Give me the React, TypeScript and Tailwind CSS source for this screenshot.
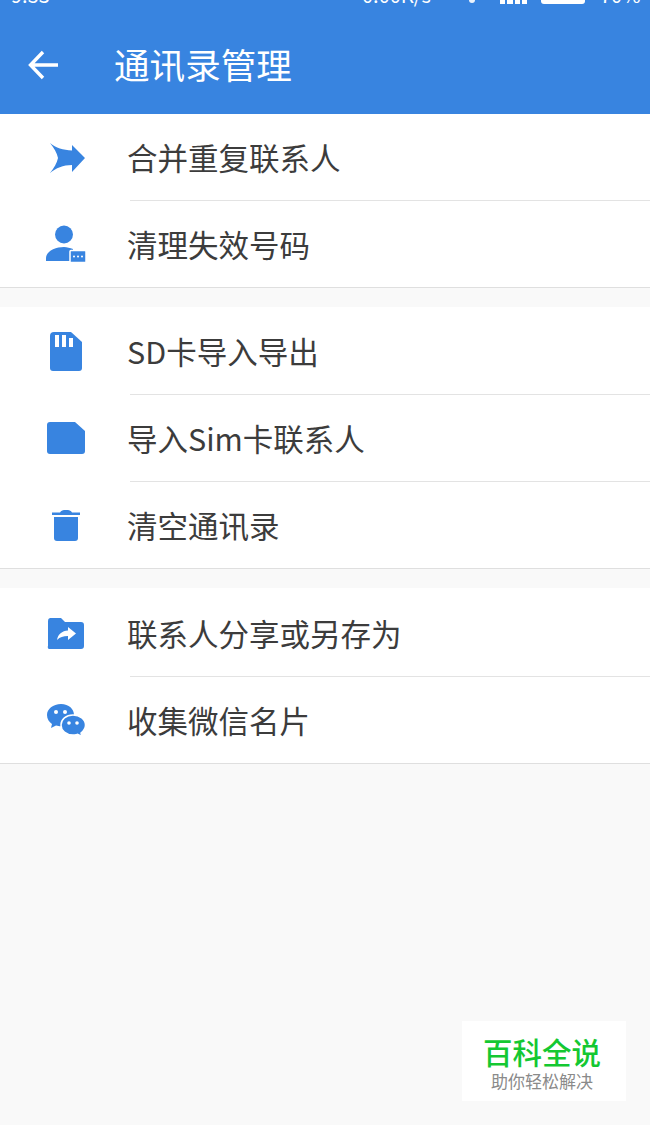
import React from 'react';

const FONT = '"Noto Sans CJK SC", "Noto Sans", sans-serif';

const MergeIcon = () => (
  <svg width="38" height="32" viewBox="0 0 38 32" fill="#3884e0">
    <path d="M3 1 C9 6 16 8 25 8.5 L25 3 L38 16 L25 30 L25 23 C16 23 9 26 3 31 C7 26 10 21 11 16 C10 11 7 6 3 1 Z" />
  </svg>
);

const PersonIcon = () => (
  <svg width="40" height="38" viewBox="0 0 40 38" fill="#3884e0">
    <circle cx="18" cy="9.5" r="9" />
    <path d="M0 36 V33 C0 26 10 22 18 22 C21 22 24 23 27 24 V36 Z" />
    <rect x="24" y="25.5" width="16" height="12" rx="1" stroke="#fff" strokeWidth="1.5" />
    <circle cx="28" cy="31.5" r="1" fill="#fff" />
    <circle cx="32" cy="31.5" r="1" fill="#fff" />
    <circle cx="36" cy="31.5" r="1" fill="#fff" />
  </svg>
);

const SdIcon = () => (
  <svg width="34" height="40" viewBox="0 0 34 40" fill="#3884e0">
    <path d="M5 0 H22 L33 10 V36 A3 3 0 0 1 30 39 H4 A3 3 0 0 1 1 36 V4 A4 4 0 0 1 5 0 Z" />
    <rect x="6" y="3" width="4" height="12" fill="#fff" />
    <rect x="13" y="3" width="4" height="12" fill="#fff" />
    <rect x="20" y="6" width="4" height="9" fill="#fff" />
  </svg>
);

const SimIcon = () => (
  <svg width="40" height="33" viewBox="0 0 40 33" fill="#3884e0">
    <path d="M4 0 H29 L39 9 V29 A3 3 0 0 1 36 32 H4 A3 3 0 0 1 1 29 V3 A3 3 0 0 1 4 0 Z" />
  </svg>
);

const TrashIcon = () => (
  <svg width="30" height="34" viewBox="0 0 30 34" fill="#3884e0">
    <path d="M1 4.5 H9 C10 2.5 12 2 15 2 C18 2 20 2.5 21 4.5 H29 V7 H1 Z" />
    <path d="M3 9 H27 V30 A3 3 0 0 1 24 33 H6 A3 3 0 0 1 3 30 Z" />
  </svg>
);

const FolderShareIcon = () => (
  <svg width="38" height="32" viewBox="0 0 38 32" fill="#3884e0">
    <path d="M3 0 H14 L18 4 H34 A3 3 0 0 1 37 7 V28 A3 3 0 0 1 34 31 H3 A2 2 0 0 1 1 28 V3 A3 3 0 0 1 3 0 Z" />
    <path d="M21 9 L29 15.5 L21 22 V18 C16 18 13 19 10 22 C11 16 15 13 21 12.5 Z" fill="#fff" />
  </svg>
);

const WechatIcon = () => (
  <svg width="40" height="34" viewBox="0 0 40 34" fill="#3884e0">
    <path d="M15 1 C7 1 1 6 1 12 C1 16 3 19 6 21 L5 25 L10 22.5 C12 23 13 23.2 15 23.2 C23 23.2 28 18 28 12 C28 6 23 1 15 1 Z" />
    <path
      d="M27 12 C20 12 15 16.5 15 22 C15 27.5 20 32 27 32 C29 32 30 31.7 31.5 31.3 L36 33.5 L35 30 C37.5 28 39.5 25.5 39.5 22 C39.5 16.5 34 12 27 12 Z"
      stroke="#fff"
      strokeWidth="1.5"
    />
    <circle cx="10" cy="9" r="2" fill="#fff" />
    <circle cx="19" cy="9" r="2" fill="#fff" />
    <circle cx="23" cy="20" r="1.8" fill="#fff" />
    <circle cx="31" cy="20" r="1.8" fill="#fff" />
  </svg>
);

const Row = ({ icon, label, divider }: { icon: React.ReactNode; label: string; divider?: boolean }) => (
  <div className={`flex items-stretch ${divider ? 'h-[87px]' : 'h-[86px]'}`}>
    <div className="flex w-[130px] shrink-0 items-center pl-[46px]">
      <div className="flex w-[40px] items-center justify-center">{icon}</div>
    </div>
    <div className={`flex flex-1 items-center ${divider ? 'border-b border-[#e3e3e3]' : ''}`}>
      <span className="-ml-[3px] text-[30.5px] leading-none text-[#3c3c3c]">{label}</span>
    </div>
  </div>
);

const Group = ({ children, className = '' }: { children: React.ReactNode; className?: string }) => (
  <div className={`border-b border-[#dfdfdf] bg-white ${className}`}>{children}</div>
);

export default function App() {
  return (
    <div className="flex h-[1125px] w-[650px] flex-col overflow-hidden bg-[#f9f9f9]" style={{ fontFamily: FONT }}>
      <header className="relative h-[114px] shrink-0 overflow-hidden bg-[#3884e0] text-white">
        <div className="absolute -top-[17px] left-[11px] text-[20px] leading-[24px]">9:53</div>
        <div className="absolute -top-[17px] left-[362px] text-[20px] leading-[24px]">0.00K/s</div>
        <div className="absolute left-[469px] top-0 h-[3px] w-[6px] rounded-b-[3px] bg-white/90" />
        <div className="absolute left-[500px] top-0 flex h-[4px] w-[27px] gap-[2px]">
          <span className="flex-1 bg-white" />
          <span className="flex-1 bg-white" />
          <span className="flex-1 bg-white" />
          <span className="flex-1 bg-white" />
        </div>
        <div className="absolute left-[541px] top-0 h-[4px] w-[44px] rounded-b-[3px] bg-white" />
        <div className="absolute -top-[17px] left-[600px] text-[20px] leading-[24px]">70%</div>
        <div className="flex h-full items-center pt-[14px]">
          <svg className="ml-[28px] mt-[1px]" width="31" height="30" viewBox="0 0 31 30" fill="none" stroke="#fff" strokeWidth="3.4">
            <path d="M30 15 H3 M15 2 L2.5 15 L15 28" />
          </svg>
          <h1 className="ml-[55px] text-[35.6px] font-normal leading-none">通讯录管理</h1>
        </div>
      </header>

      <Group>
        <Row icon={<MergeIcon />} label="合并重复联系人" divider />
        <Row icon={<PersonIcon />} label="清理失效号码" />
      </Group>
      <div className="h-[19px] shrink-0" />
      <Group className="pt-px">
        <Row icon={<SdIcon />} label="SD卡导入导出" divider />
        <Row icon={<SimIcon />} label="导入Sim卡联系人" divider />
        <Row icon={<TrashIcon />} label="清空通讯录" />
      </Group>
      <div className="h-[19px] shrink-0" />
      <Group className="pt-[2px]">
        <Row icon={<FolderShareIcon />} label="联系人分享或另存为" divider />
        <Row icon={<WechatIcon />} label="收集微信名片" />
      </Group>

      <div className="relative flex-1">
        <div className="absolute left-[462px] top-[257px] flex h-[80px] w-[164px] flex-col items-center justify-center bg-white pt-[4px]">
          <span className="-ml-[4px] text-[29.5px] font-medium leading-[32px] text-[#14c832]">百科全说</span>
          <span className="-ml-[4px] mt-[4px] text-[17px] leading-[20px] text-[#8a8a8a]">助你轻松解决</span>
        </div>
      </div>
    </div>
  );
}
